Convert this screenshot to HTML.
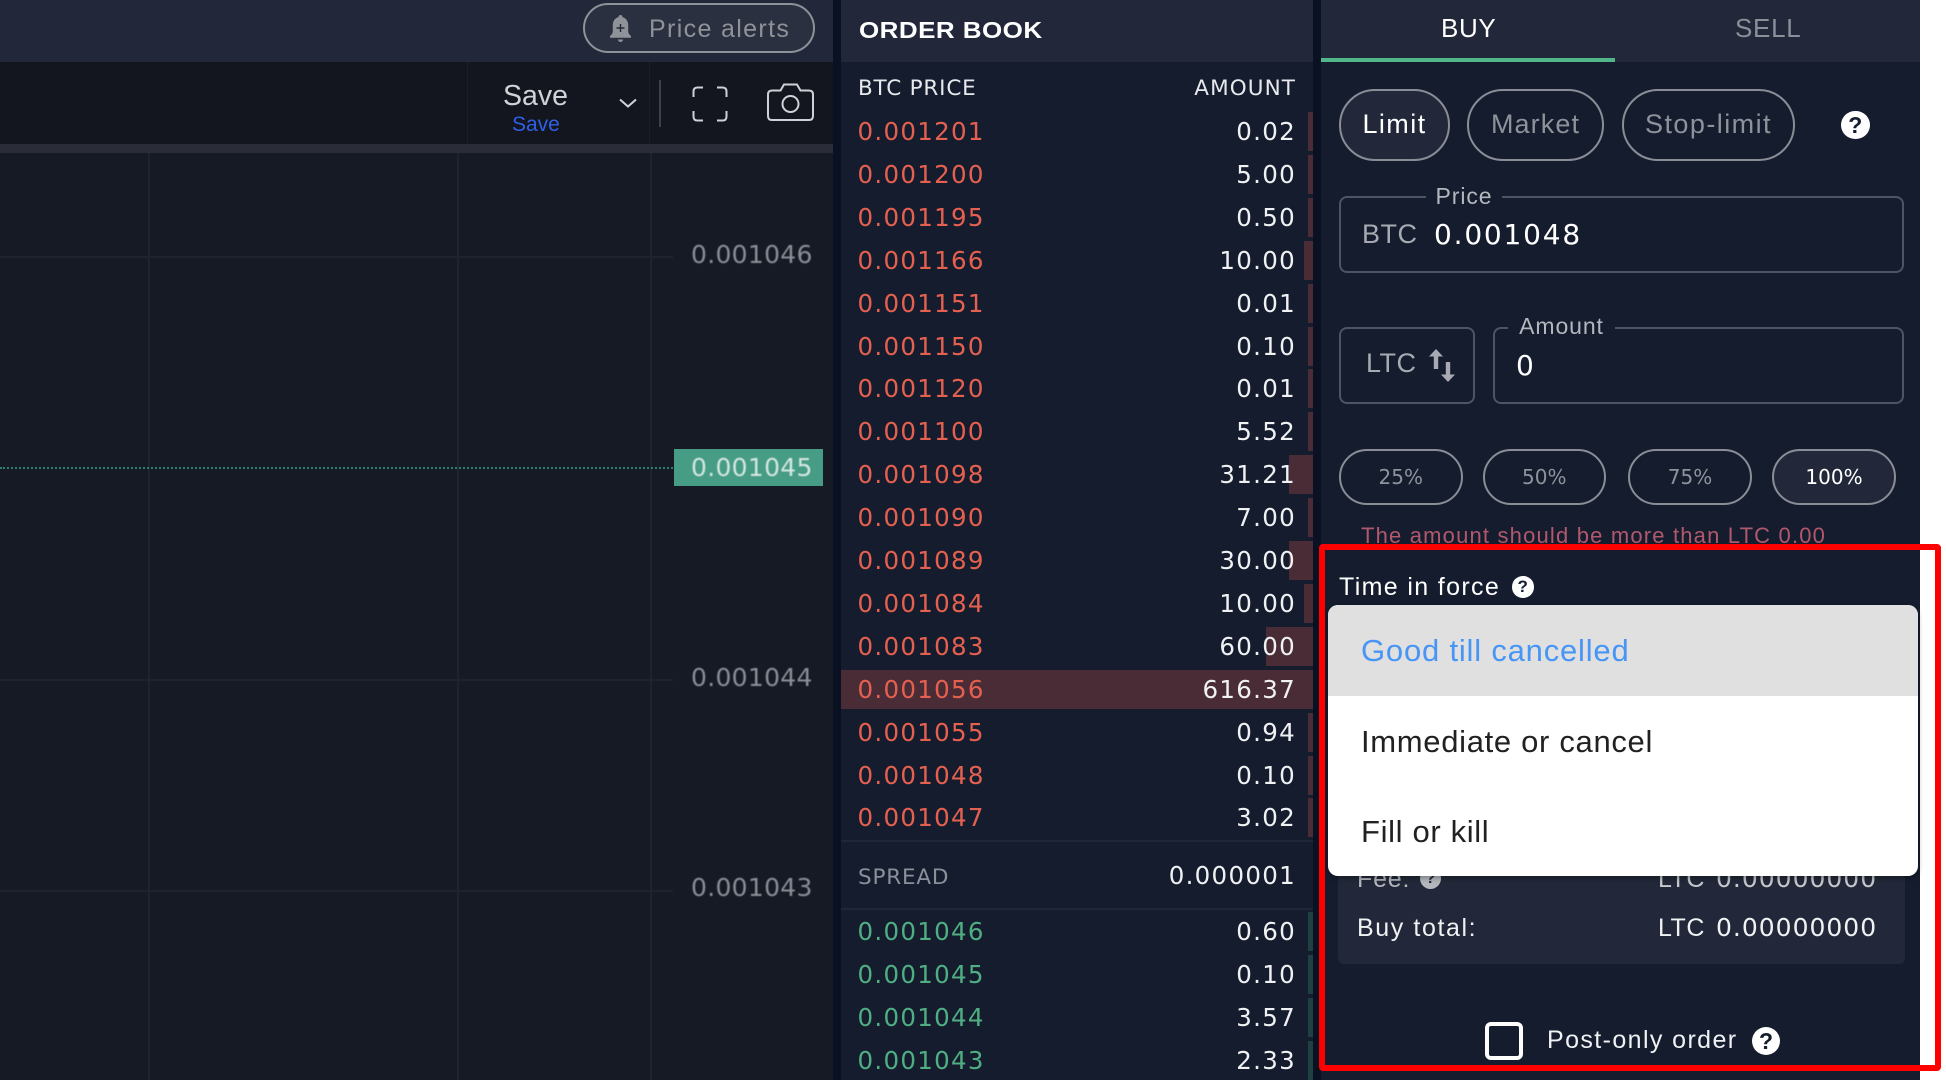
<!DOCTYPE html>
<html>
<head>
<meta charset="utf-8">
<title>Order book</title>
<style>
html,body{margin:0;padding:0;background:#fff;}
body{position:relative;width:1946px;height:1080px;overflow:hidden;font-family:"Liberation Sans",sans-serif;color:#fff;}
.a{position:absolute;white-space:nowrap;}
.t{position:absolute;white-space:nowrap;height:50px;line-height:50px;}
.n{font-family:"DejaVu Sans",sans-serif;}
.r{position:absolute;left:0;width:472px;height:39px;}
.r .b{position:absolute;right:0;top:0;height:39px;background:#4a2c36;}
.g .b{background:#1f3f42;}
.r .p{position:absolute;left:16.5px;top:-5px;height:50px;font:24.5px/50px "DejaVu Sans",sans-serif;letter-spacing:1.3px;color:#e5604f;}
.g .p{color:#4fae82;}
.r .q{position:absolute;right:17px;top:-5px;height:50px;font:24.5px/50px "DejaVu Sans",sans-serif;letter-spacing:1.3px;color:#f0f1f3;}
.pill{position:absolute;box-sizing:border-box;border:2px solid #8a8d96;display:flex;align-items:center;justify-content:center;color:#8f929a;}
.box{position:absolute;box-sizing:border-box;border:2px solid #4d5564;border-radius:8px;}
.help{position:absolute;border-radius:50%;background:#fff;color:#141c2e;font-weight:bold;text-align:center;}
.lbl{position:absolute;background:#141c2e;text-align:center;color:#b4b7bd;font-size:23px;letter-spacing:.9px;height:30px;line-height:30px;white-space:nowrap;}
</style>
</head>
<body>

<!-- Chart panel -->
<div class="a" style="left:0;top:0;width:833px;height:62px;background:#222839;"></div>
<div class="a" style="left:0;top:62px;width:833px;height:82px;background:#13161f;"></div>
<div class="a" style="left:0;top:144px;width:833px;height:9px;background:#2a2d37;"></div>
<div class="a" style="left:0;top:153px;width:833px;height:927px;background:#161a25;"></div>

<div class="a" style="left:467px;top:62px;width:1px;height:82px;background:#1b1e28;"></div>
<div class="a" style="left:649px;top:62px;width:1px;height:82px;background:#1b1e28;"></div>

<!-- gridlines -->
<div class="a" style="left:148px;top:153px;width:2px;height:927px;background:#1f232e;"></div>
<div class="a" style="left:457px;top:153px;width:2px;height:927px;background:#1f232e;"></div>
<div class="a" style="left:650px;top:153px;width:2px;height:927px;background:#1f232e;"></div>
<div class="a" style="left:0;top:256px;width:673px;height:2px;background:#1f232e;"></div>
<div class="a" style="left:0;top:679px;width:673px;height:2px;background:#1f232e;"></div>
<div class="a" style="left:0;top:890px;width:673px;height:2px;background:#1f232e;"></div>

<!-- price alerts -->
<div class="a" style="box-sizing:border-box;left:583px;top:3px;width:232px;height:50px;border:2px solid #8f9298;border-radius:25px;background:#2a3040;"></div>
<svg class="a" style="left:609px;top:15px;" width="23" height="28" viewBox="0 0 23 28">
<path fill="#8f9298" d="M11.500 0c1.200 0 2 .9 2 2.100c3.800 1 5.700 4.200 5.700 8.100v5.800c0 2.300 1.100 3.600 2.800 5v1.700H1v-1.700c1.700-1.400 2.800-2.700 2.800-5v-5.800c0-3.900 1.900-7.100 5.700-8.100C9.500 .9 10.300 0 11.500 0z"/>
<path fill="#8f9298" d="M9 24.500h5c0 1.300-1.100 2.500-2.500 2.500S9 25.800 9 24.500z"/>
<path stroke="#222839" stroke-width="1.400" d="M11.500 9v8M7.500 13h8"/>
</svg>
<div class="t" style="left:649px;top:4px;font-size:25px;letter-spacing:1.350px;color:#8f9298;">Price alerts</div>

<!-- toolbar -->
<div class="t" style="left:503px;top:71px;font-size:28.500px;color:#d0d2d6;">Save</div>
<div class="t" style="left:512px;top:99.500px;font-size:21px;color:#2f5fe6;">Save</div>
<svg class="a" style="left:618px;top:97px;" width="20" height="12" viewBox="0 0 20 12"><path d="M2 2.500l8 7l8-7" fill="none" stroke="#d0d2d6" stroke-width="2"/></svg>
<div class="a" style="left:659px;top:80px;width:2px;height:47px;background:#3d4048;"></div>
<svg class="a" style="left:692px;top:86px;" width="36" height="36" viewBox="0 0 36 36" fill="none" stroke="#cfd1d6" stroke-width="2">
<path d="M1.500 11V5.500q0-4 4-4H11M25 1.500h5.500q4 0 4 4V11M34.500 25v5.500q0 4-4 4H25M11 34.500H5.500q-4 0-4-4V25"/>
</svg>
<svg class="a" style="left:767px;top:83px;" width="47" height="38" viewBox="0 0 47 38" fill="none" stroke="#cfd1d6" stroke-width="2">
<path d="M5 7.500h8.500l3.500-6h13l3.500 6H42q4 0 4 4V33q0 4-4 4H5q-4 0-4-4V11.500q0-4 4-4z"/>
<circle cx="23.500" cy="21" r="8"/>
</svg>

<!-- axis labels -->
<div class="t n" style="left:691px;top:230px;font-size:25px;letter-spacing:.3px;color:#8b8e95;filter:blur(.5px);">0.001046</div>
<div class="a" style="left:674px;top:449px;width:149px;height:37px;background:#469c84;"></div>
<div class="a" style="left:0;top:467px;width:673px;height:0;border-top:2px dotted #2e7f70;"></div>
<div class="t n" style="left:691px;top:443px;font-size:25px;letter-spacing:.3px;color:#d4e6e0;filter:blur(.5px);">0.001045</div>
<div class="t n" style="left:691px;top:653px;font-size:25px;letter-spacing:.3px;color:#8b8e95;filter:blur(.5px);">0.001044</div>
<div class="t n" style="left:691px;top:863px;font-size:25px;letter-spacing:.3px;color:#8b8e95;filter:blur(.5px);">0.001043</div>

<!-- dark gap columns -->
<div class="a" style="left:833px;top:0;width:8px;height:1080px;background:#0a1122;"></div>
<div class="a" style="left:1313px;top:0;width:8px;height:1080px;background:#0a1122;"></div>

<!-- Order book -->
<div class="a" style="left:841px;top:0;width:472px;height:1080px;background:#141c2e;overflow:hidden;">
  <div class="a" style="left:0;top:0;width:472px;height:62px;background:#222839;"></div>
  <div class="t" style="left:18px;top:5px;font-size:23px;font-weight:bold;letter-spacing:.4px;color:#fff;transform:scaleX(1.13);transform-origin:left center;">ORDER BOOK</div>
  <div class="t n" style="left:17px;top:64px;font-size:21.500px;letter-spacing:.8px;color:#e8e9ec;">BTC PRICE</div>
  <div class="t n" style="right:17px;top:64px;font-size:21.500px;letter-spacing:1.100px;color:#e8e9ec;">AMOUNT</div>

  <div class="r" style="top:112px"><span class="b" style="width:5px"></span><span class="p">0.001201</span><span class="q">0.02</span></div>
  <div class="r" style="top:154.900px"><span class="b" style="width:5px"></span><span class="p">0.001200</span><span class="q">5.00</span></div>
  <div class="r" style="top:197.800px"><span class="b" style="width:5px"></span><span class="p">0.001195</span><span class="q">0.50</span></div>
  <div class="r" style="top:240.700px"><span class="b" style="width:9.500px"></span><span class="p">0.001166</span><span class="q">10.00</span></div>
  <div class="r" style="top:283.600px"><span class="b" style="width:5px"></span><span class="p">0.001151</span><span class="q">0.01</span></div>
  <div class="r" style="top:326.500px"><span class="b" style="width:5px"></span><span class="p">0.001150</span><span class="q">0.10</span></div>
  <div class="r" style="top:369.400px"><span class="b" style="width:5px"></span><span class="p">0.001120</span><span class="q">0.01</span></div>
  <div class="r" style="top:412.300px"><span class="b" style="width:5px"></span><span class="p">0.001100</span><span class="q">5.52</span></div>
  <div class="r" style="top:455.200px"><span class="b" style="width:24px"></span><span class="p">0.001098</span><span class="q">31.21</span></div>
  <div class="r" style="top:498.100px"><span class="b" style="width:5px"></span><span class="p">0.001090</span><span class="q">7.00</span></div>
  <div class="r" style="top:541px"><span class="b" style="width:24px"></span><span class="p">0.001089</span><span class="q">30.00</span></div>
  <div class="r" style="top:583.900px"><span class="b" style="width:9.500px"></span><span class="p">0.001084</span><span class="q">10.00</span></div>
  <div class="r" style="top:626.800px"><span class="b" style="width:47px"></span><span class="p">0.001083</span><span class="q">60.00</span></div>
  <div class="r" style="top:669.700px"><span class="b" style="width:472px"></span><span class="p">0.001056</span><span class="q">616.37</span></div>
  <div class="r" style="top:712.600px"><span class="b" style="width:5px"></span><span class="p">0.001055</span><span class="q">0.94</span></div>
  <div class="r" style="top:755.500px"><span class="b" style="width:5px"></span><span class="p">0.001048</span><span class="q">0.10</span></div>
  <div class="r" style="top:798.400px"><span class="b" style="width:5px"></span><span class="p">0.001047</span><span class="q">3.02</span></div>

  <div class="a" style="left:0;top:840px;width:472px;height:2px;background:#1e2738;"></div>
  <div class="t n" style="left:17px;top:853px;font-size:21.500px;letter-spacing:.8px;color:#8b8f99;">SPREAD</div>
  <div class="t n" style="right:17px;top:851px;font-size:24.500px;letter-spacing:1.300px;color:#f0f1f3;">0.000001</div>
  <div class="a" style="left:0;top:908px;width:472px;height:2px;background:#1e2738;"></div>

  <div class="r g" style="top:912px"><span class="b" style="width:5px"></span><span class="p">0.001046</span><span class="q">0.60</span></div>
  <div class="r g" style="top:955px"><span class="b" style="width:5px"></span><span class="p">0.001045</span><span class="q">0.10</span></div>
  <div class="r g" style="top:998px"><span class="b" style="width:5px"></span><span class="p">0.001044</span><span class="q">3.57</span></div>
  <div class="r g" style="top:1041px"><span class="b" style="width:5px"></span><span class="p">0.001043</span><span class="q">2.33</span></div>
</div>

<!-- Buy / Sell panel -->
<div class="a" style="left:1321px;top:0;width:599px;height:1080px;background:#141c2e;"></div>
<div class="a" style="left:1321px;top:0;width:599px;height:62px;background:#222839;"></div>
<div class="a" style="left:1321px;top:58px;width:294px;height:4px;background:#52b788;"></div>
<div class="t" style="left:1441px;top:3px;font-size:26px;letter-spacing:.6px;color:#fff;">BUY</div>
<div class="t" style="left:1735px;top:3px;font-size:26px;letter-spacing:.7px;color:#8b8f99;">SELL</div>

<div class="pill" style="left:1339px;top:89px;width:111px;height:72px;border-radius:36px;background:#222839;color:#fff;font-size:27px;letter-spacing:1.400px;padding-bottom:2px;">Limit</div>
<div class="pill" style="left:1467px;top:89px;width:137px;height:72px;border-radius:36px;font-size:27px;letter-spacing:1.100px;padding-bottom:2px;">Market</div>
<div class="pill" style="left:1622px;top:89px;width:173px;height:72px;border-radius:36px;font-size:27px;letter-spacing:1.450px;padding-bottom:2px;">Stop-limit</div>
<div class="help" style="left:1841px;top:110.500px;width:28.500px;height:28.500px;line-height:29px;font-size:23px;">?</div>

<div class="box" style="left:1339px;top:196px;width:565px;height:77px;"></div>
<div class="lbl" style="left:1426px;top:180.500px;width:76px;">Price</div>
<div class="t" style="left:1362px;top:209px;font-size:27px;letter-spacing:.5px;color:#a7aab2;">BTC</div>
<div class="t n" style="left:1434px;top:210px;font-size:28px;letter-spacing:1.800px;color:#fff;">0.001048</div>

<div class="box" style="left:1339px;top:327px;width:136px;height:77px;"></div>
<div class="t" style="left:1366px;top:338px;font-size:27px;letter-spacing:.5px;color:#a7aab2;">LTC</div>
<svg class="a" style="left:1429px;top:349px;" width="26" height="33" viewBox="0 0 26 33">
<path fill="#a7aab2" d="M7 0l7 7.500H9.200V20H4.800V7.500H0zM19 33l-7-7.500h4.800V13h4.400v12.500H26z"/>
</svg>
<div class="box" style="left:1493px;top:327px;width:411px;height:77px;"></div>
<div class="lbl" style="left:1508px;top:311px;width:107px;">Amount</div>
<div class="t n" style="left:1516px;top:341px;font-size:28px;color:#fff;">0</div>

<div class="pill n" style="left:1339px;top:449px;width:123.500px;height:55.500px;border-radius:28px;font-size:20px;">25%</div>
<div class="pill n" style="left:1482.500px;top:449px;width:123.500px;height:55.500px;border-radius:28px;font-size:20px;">50%</div>
<div class="pill n" style="left:1628px;top:449px;width:124px;height:55.500px;border-radius:28px;font-size:20px;">75%</div>
<div class="pill n" style="left:1772px;top:449px;width:124px;height:55.500px;border-radius:28px;font-size:20px;background:#222839;color:#fff;">100%</div>

<div class="t" style="left:1361px;top:511px;font-size:22px;letter-spacing:1.180px;color:#b0596d;">The amount should be more than LTC 0.00</div>

<div class="t" style="left:1339px;top:562px;font-size:25px;letter-spacing:1.350px;color:#fff;">Time in force</div>
<div class="help" style="left:1512px;top:576px;width:21.500px;height:21.500px;line-height:22px;font-size:17px;">?</div>

<!-- Summary box -->
<div class="a" style="left:1338px;top:850px;width:567px;height:114px;background:#222839;border-radius:6px;"></div>
<div class="t" style="left:1357px;top:854px;font-size:25px;letter-spacing:.8px;color:#b4b7bd;">Fee:</div>
<div class="help" style="left:1420px;top:868px;width:21px;height:21px;line-height:21px;font-size:16px;background:#b4b7bd;color:#222839;">?</div>
<div class="t" style="left:1658px;top:854px;font-size:25px;letter-spacing:.5px;color:#c6c8cd;">LTC</div>
<div class="t n" style="left:1716px;top:854px;font-size:25px;letter-spacing:1px;color:#c6c8cd;">0.00000000</div>
<div class="t" style="left:1357px;top:903px;font-size:25px;letter-spacing:1.600px;color:#f0f1f3;">Buy total:</div>
<div class="t" style="left:1658px;top:903px;font-size:25px;letter-spacing:.5px;color:#f0f1f3;">LTC</div>
<div class="t n" style="left:1716px;top:903px;font-size:25px;letter-spacing:1px;color:#f0f1f3;">0.00000000</div>

<!-- Dropdown -->
<div class="a" style="left:1328px;top:605px;width:590px;height:271px;background:#fff;border-radius:10px;overflow:hidden;box-shadow:0 2px 6px rgba(0,0,0,.35);">
  <div class="a" style="left:0;top:0;width:590px;height:91px;background:#e0e0e0;"></div>
  <div class="t" style="left:33px;top:21px;font-size:31px;letter-spacing:.8px;color:#4795f5;">Good till cancelled</div>
  <div class="t" style="left:33px;top:111.500px;font-size:31px;letter-spacing:.68px;color:#212121;">Immediate or cancel</div>
  <div class="t" style="left:33px;top:201.500px;font-size:31px;letter-spacing:.65px;color:#212121;">Fill or kill</div>
</div>

<!-- Post-only -->
<div class="a" style="box-sizing:border-box;left:1484.500px;top:1022px;width:38px;height:38px;border:4.500px solid #fff;border-radius:6px;"></div>
<div class="t" style="left:1547px;top:1015px;font-size:25px;letter-spacing:1.400px;color:#f0f1f3;">Post-only order</div>
<div class="help" style="left:1752px;top:1027px;width:28px;height:28px;line-height:29px;font-size:23px;">?</div>

<!-- Red annotation frame -->
<div class="a" style="box-sizing:border-box;left:1319px;top:544px;width:622px;height:527px;border:6.500px solid #fe0000;border-radius:4px;"></div>

</body>
</html>
